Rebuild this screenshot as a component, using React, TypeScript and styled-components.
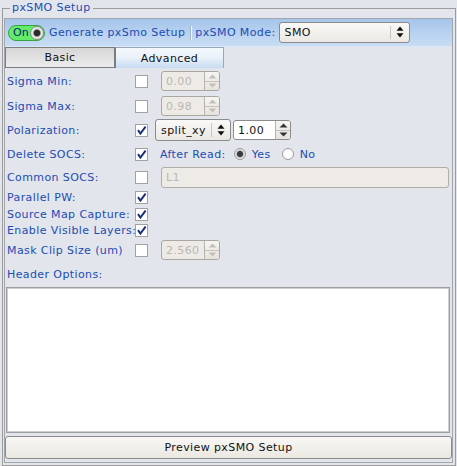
import React from 'react';
import styled, { createGlobalStyle } from 'styled-components';

const GlobalStyle = createGlobalStyle`
  html, body {
    margin: 0;
    background: #e2e5eb;
    font-family: "DejaVu Sans", "Noto Sans", sans-serif;
    font-size: 11px;
    letter-spacing: 0.4px;
  }
  * { box-sizing: border-box; }
`;

const Page = styled.div`
  width: 457px;
  height: 466px;
  background: #e2e5eb;
  overflow: hidden;
`;

const Frame = styled.fieldset`
  margin: 0 1px 0 2px;
  padding: 0 2px 2px 1px;
  border: 1px solid #9c9c9c;
  min-width: 0;
`;

const Legend = styled.legend`
  margin-left: 6px;
  padding: 0 2px;
  line-height: 16px;
  color: #1d4cb3;
  font-size: 11px;
`;

const Panel = styled.div`
  height: 445px;
  margin-top: 2px;
  border: 1px solid #a3a6ab;
  display: flex;
  flex-direction: column;
`;

const HeaderBar = styled.div`
  height: 28px;
  display: flex;
  align-items: center;
  padding-left: 3px;
  background: linear-gradient(#a6c5ea, #c8ddf4);
  border-bottom: 1px solid #d9e7f7;
`;

const Toggle = styled.div`
  width: 37px;
  height: 16px;
  border-radius: 8px;
  background: #62ec68;
  border: 1px solid #3aa341;
  display: flex;
  align-items: center;
  justify-content: space-between;
  padding: 0 0 0 4px;
  color: #0c2a7a;
  font-size: 11px;
  letter-spacing: 0;
`;

const Knob = styled.span`
  width: 14px;
  height: 14px;
  border-radius: 50%;
  background: radial-gradient(circle, #2a2a2a 0 2.8px, #8a8a8a 3.4px, #e6e6e6 4.4px);
  border: 1px solid #8c8c8c;
`;

const BlueText = styled.span<{ ml?: number }>`
  color: #1d4cb3;
  margin-left: ${(p) => p.ml ?? 0}px;
  white-space: nowrap;
`;

const Sep = styled.span`
  width: 2px;
  height: 14px;
  margin: 0 3px 0 5px;
  background: #f4f8fd;
  border-left: 1px solid #9fb7d6;
`;

const SelectBox = styled.div<{ w: number; h: number; ml?: number }>`
  width: ${(p) => p.w}px;
  height: ${(p) => p.h}px;
  margin-left: ${(p) => p.ml ?? 0}px;
  border: 1px solid #8b8b8b;
  border-radius: 3px;
  background: linear-gradient(#faf9f7, #ebe8e3);
  display: flex;
  align-items: center;
  color: #111;
  flex-shrink: 0;
`;

const SelectText = styled.span`
  flex: 1;
  padding-left: 5px;
`;

const SelectArrow = styled.span`
  width: 19px;
  height: 70%;
  border-left: 1px solid #c9c6c0;
  display: flex;
  align-items: center;
  justify-content: center;
`;

const TabStrip = styled.div`
  height: 21px;
  display: flex;
`;

const Tab = styled.div<{ active?: boolean }>`
  width: ${(p) => (p.active ? 109 : 110)}px;
  display: flex;
  align-items: center;
  justify-content: center;
  color: #111;
  border-top: 1px solid ${(p) => (p.active ? '#9aa7b8' : '#7d7d7d')};
  border-left: 1px solid #7d7d7d;
  border-right: 1px solid ${(p) => (p.active ? '#9aa7b8' : '#7d7d7d')};
  border-bottom: ${(p) => (p.active ? 'none' : '1px solid #7d7d7d')};
  background: ${(p) =>
    p.active
      ? 'linear-gradient(#f4f8fc, #e9f1fa 50%, #c7dbf2)'
      : 'linear-gradient(#d6d6d6, #ececec)'};
`;

const Row = styled.div<{ top: number; h: number }>`
  display: flex;
  align-items: center;
  margin-top: ${(p) => p.top}px;
  height: ${(p) => p.h}px;
  flex-shrink: 0;
`;

const Label = styled.span`
  width: 130px;
  padding-left: 2px;
  color: #1d4cb3;
  white-space: nowrap;
  overflow: visible;
`;

const CheckCell = styled.span<{ w?: number }>`
  width: ${(p) => p.w ?? 26}px;
  display: flex;
  align-items: center;
  flex-shrink: 0;
`;

const CheckBox = styled.span`
  width: 13px;
  height: 13px;
  background: #fff;
  border: 1px solid #a2a2a2;
  display: flex;
  align-items: center;
  justify-content: center;
`;

const Spin = styled.div<{ w: number; disabled?: boolean; ml?: number }>`
  width: ${(p) => p.w}px;
  height: 20px;
  margin-left: ${(p) => p.ml ?? 0}px;
  border: 1px solid ${(p) => (p.disabled ? '#aaa6a0' : '#8b8b8b')};
  border-radius: 3px;
  background: ${(p) => (p.disabled ? '#eeebe7' : '#fff')};
  color: ${(p) => (p.disabled ? '#b9b7b3' : '#111')};
  display: flex;
  align-items: stretch;
  flex-shrink: 0;
`;

const SpinValue = styled.span`
  flex: 1;
  display: flex;
  align-items: center;
  padding-left: 4px;
`;

const SpinButtons = styled.span`
  width: 15px;
  display: flex;
  flex-direction: column;
  border-left: 1px solid #b7b3ad;
  background: linear-gradient(#f6f4f1, #e6e3de);
  border-radius: 0 2px 2px 0;
`;

const SpinHalf = styled.span<{ bottom?: boolean }>`
  flex: 1;
  display: flex;
  align-items: center;
  justify-content: center;
  border-top: ${(p) => (p.bottom ? '1px solid #c4c0ba' : 'none')};
`;

const TextInput = styled.div`
  width: 288px;
  height: 21px;
  border: 1px solid #b0aca6;
  border-radius: 3px;
  background: #eeebe7;
  color: #b9b7b3;
  display: flex;
  align-items: center;
  padding-left: 4px;
`;

const Radio = styled.span<{ checked?: boolean; ml?: number }>`
  width: 12px;
  height: 12px;
  margin-left: ${(p) => p.ml ?? 0}px;
  border-radius: 50%;
  border: 1px solid #9a9a9a;
  background: ${(p) =>
    p.checked
      ? 'radial-gradient(circle, #3b3b3b 0 2.5px, #777 3.2px, #e4e4e4 3.8px)'
      : '#fff'};
  flex-shrink: 0;
`;

const PlainText = styled.span<{ ml?: number }>`
  color: #1d4cb3;
  margin-left: ${(p) => p.ml ?? 0}px;
`;

const TextArea = styled.div`
  flex: 1;
  margin: 4px 2px 0 1px;
  background: #fff;
  border: 1px solid #9e9e9e;
  box-shadow: inset 1px 1px 0 #cfcfcf, inset -1px -1px 0 #cfcfcf;
`;

const PreviewButton = styled.div`
  height: 23px;
  margin: 3px 0 3px 0;
  border: 1px solid #8b8b8b;
  border-radius: 3px;
  background: linear-gradient(#f8f7f4, #ebe8e2);
  display: flex;
  align-items: center;
  justify-content: center;
  color: #111;
  flex-shrink: 0;
`;

const Check = () => (
  <svg width="11" height="11" viewBox="0 0 11 11">
    <path d="M2 5.2 L4.4 8.6 L9.6 1.6" fill="none" stroke="#1b2f7a" strokeWidth="2" strokeLinejoin="miter" />
  </svg>
);

const UpDown = () => (
  <svg width="8" height="12" viewBox="0 0 8 12">
    <path d="M4 0.5 L7.5 4.8 H0.5 Z" fill="#111" />
    <path d="M4 11.5 L7.5 7.2 H0.5 Z" fill="#111" />
  </svg>
);

const Tri = ({ down, color }: { down?: boolean; color: string }) => (
  <svg width="9" height="5" viewBox="0 0 9 5">
    {down ? (
      <path d="M4.5 4.5 L8.5 0.5 H0.5 Z" fill={color} />
    ) : (
      <path d="M4.5 0.5 L8.5 4.5 H0.5 Z" fill={color} />
    )}
  </svg>
);

type SpinProps = { value: string; w: number; disabled?: boolean; ml?: number };

const SpinBox = ({ value, w, disabled, ml }: SpinProps) => {
  const c = disabled ? '#c2c0bc' : '#333';
  return (
    <Spin w={w} disabled={disabled} ml={ml}>
      <SpinValue>{value}</SpinValue>
      <SpinButtons>
        <SpinHalf>
          <Tri color={c} />
        </SpinHalf>
        <SpinHalf bottom>
          <Tri down color={c} />
        </SpinHalf>
      </SpinButtons>
    </Spin>
  );
};

const Box = ({ on }: { on?: boolean }) => <CheckBox>{on && <Check />}</CheckBox>;

const App = () => (
  <Page>
    <GlobalStyle />
    <Frame>
      <Legend>pxSMO Setup</Legend>
      <Panel>
        <HeaderBar>
          <Toggle>
            On
            <Knob />
          </Toggle>
          <BlueText ml={4}>Generate pxSmo Setup</BlueText>
          <Sep />
          <BlueText>pxSMO Mode:</BlueText>
          <SelectBox w={131} h={21} ml={3}>
            <SelectText>SMO</SelectText>
            <SelectArrow>
              <UpDown />
            </SelectArrow>
          </SelectBox>
        </HeaderBar>
        <TabStrip>
          <Tab>Basic</Tab>
          <Tab active>Advanced</Tab>
        </TabStrip>

        <Row top={3} h={20}>
          <Label>Sigma Min:</Label>
          <CheckCell>
            <Box />
          </CheckCell>
          <SpinBox value="0.00" w={59} disabled />
        </Row>
        <Row top={5} h={20}>
          <Label>Sigma Max:</Label>
          <CheckCell>
            <Box />
          </CheckCell>
          <SpinBox value="0.98" w={59} disabled />
        </Row>
        <Row top={3} h={22}>
          <Label>Polarization:</Label>
          <CheckCell w={20}>
            <Box on />
          </CheckCell>
          <SelectBox w={76} h={22}>
            <SelectText>split_xy</SelectText>
            <SelectArrow>
              <UpDown />
            </SelectArrow>
          </SelectBox>
          <SpinBox value="1.00" w={58} ml={2} />
        </Row>
        <Row top={2} h={22}>
          <Label>Delete SOCS:</Label>
          <CheckCell w={25}>
            <Box on />
          </CheckCell>
          <PlainText>After Read:</PlainText>
          <Radio checked ml={8} />
          <PlainText ml={6}>Yes</PlainText>
          <Radio ml={11} />
          <PlainText ml={6}>No</PlainText>
        </Row>
        <Row top={2} h={21}>
          <Label>Common SOCS:</Label>
          <CheckCell>
            <Box />
          </CheckCell>
          <TextInput>L1</TextInput>
        </Row>
        <Row top={1} h={16}>
          <Label>Parallel PW:</Label>
          <CheckCell>
            <Box on />
          </CheckCell>
        </Row>
        <Row top={1} h={16}>
          <Label>Source Map Capture:</Label>
          <CheckCell>
            <Box on />
          </CheckCell>
        </Row>
        <Row top={0} h={16}>
          <Label>Enable Visible Layers:</Label>
          <CheckCell>
            <Box on />
          </CheckCell>
        </Row>
        <Row top={2} h={20}>
          <Label>Mask Clip Size (um)</Label>
          <CheckCell>
            <Box />
          </CheckCell>
          <SpinBox value="2.560" w={59} disabled />
        </Row>
        <Row top={5} h={18}>
          <Label>Header Options:</Label>
        </Row>
        <TextArea />
        <PreviewButton>Preview pxSMO Setup</PreviewButton>
      </Panel>
    </Frame>
  </Page>
);

export default App;
